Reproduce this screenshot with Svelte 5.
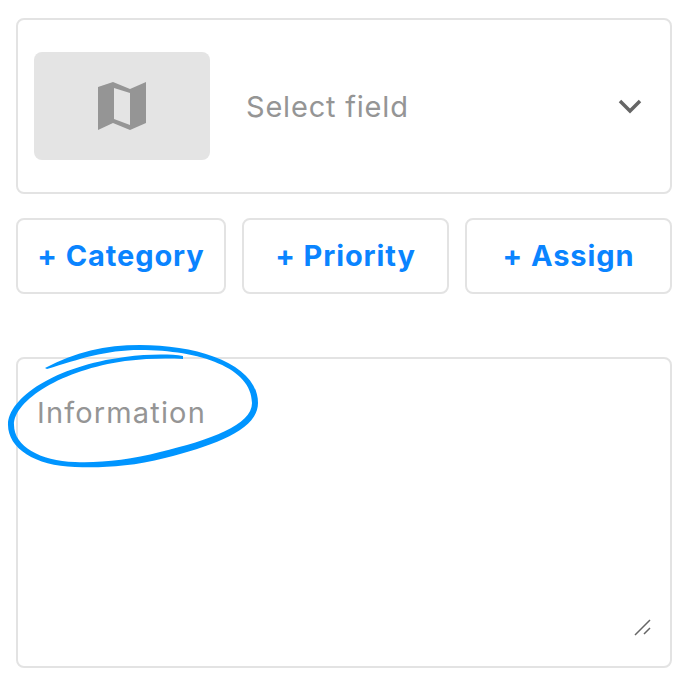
<script>
  let actions = ['Category', 'Priority', 'Assign'];
  let info = $state('');
</script>

<div class="page">
  <div class="field">
    <div class="thumb">
      <svg width="50" height="50" viewBox="0 0 50 50" aria-hidden="true">
        <path d="M1 6 L16 1 L33 8 L49 1 L49 42 L33 49 L16 42 L1 49 Z M17 7 L17 38 L33 44 L33 12 Z" fill="#959595" fill-rule="evenodd" />
      </svg>
    </div>
    <span class="select-label">Select field</span>
    <svg class="chevron" width="26" height="16" viewBox="0 0 26 16" aria-hidden="true">
      <path d="M3 3 L13 13 L23 3" fill="none" stroke="#666" stroke-width="3.500" />
    </svg>
  </div>

  <div class="actions">
    {#each actions as action}
      <button class="action">+ {action}</button>
    {/each}
  </div>

  <div class="info">
    <textarea placeholder="Information" bind:value={info}></textarea>
    <svg class="grip" width="18" height="18" viewBox="0 0 18 18" aria-hidden="true">
      <path d="M1 16 L16 1 M10 15 L16 9" stroke="#666" stroke-width="1.500" fill="none" />
    </svg>
    <svg class="scribble" width="692" height="130" viewBox="0 330 692 130" aria-hidden="true">
      <path fill="#0095ff" d="M45 368 C75 352 105 345 140 345 C200 345 258 365 258 403 C258 430 215 445 165 458 C130 467 100 468 75 467 C35 466 8 448 8 425 C8 398 55 366 125 357 C148 354 170 354 183 356 L183 359 C170 358 148 358 125 361 C62 370 14 400 14 425 C14 446 40 461 75 462 C100 463 130 460 160 452 C210 440 252 425 252 403 C252 368 200 350 140 350 C105 350 80 359 47 369 Z" />
    </svg>
  </div>
</div>

<style>
  :global(body) {
    background: #fff;
  }

  .page {
    width: 692px;
    height: 688px;
    box-sizing: border-box;
    padding: 18px 20px 20px 16px;
    display: flex;
    flex-direction: column;
    font-family: Inter, "Open Sans", sans-serif;
  }

  .field {
    height: 176px;
    box-sizing: border-box;
    border: 2px solid #e3e3e3;
    border-radius: 8px;
    display: flex;
    align-items: center;
    padding: 0 27px 0 16px;
  }

  .thumb {
    width: 176px;
    height: 108px;
    border-radius: 8px;
    background: #e4e4e4;
    display: flex;
    align-items: center;
    justify-content: center;
  }

  .select-label {
    margin-left: 36px;
    flex: 1;
    font-size: 29px;
    letter-spacing: 0.8px;
    color: #959595;
  }

  .actions {
    margin-top: 24px;
    display: grid;
    grid-template-columns: 210px 207px 207px;
    gap: 16px;
  }

  .action {
    height: 76px;
    padding: 0 0 2px;
    background: #fff;
    border: 2px solid #e3e3e3;
    border-radius: 8px;
    font-family: inherit;
    font-size: 29px;
    font-weight: 700;
    letter-spacing: 0.9px;
    color: #0a84ff;
  }

  .info {
    margin-top: 63px;
    height: 311px;
    position: relative;
  }

  textarea {
    display: block;
    width: 100%;
    height: 100%;
    box-sizing: border-box;
    padding: 36px 19px;
    border: 2px solid #e3e3e3;
    border-radius: 8px;
    outline: none;
    resize: none;
    font-family: inherit;
    font-size: 29px;
    letter-spacing: 1.15px;
    line-height: 36px;
  }

  textarea::placeholder {
    color: #959595;
    opacity: 1;
  }

  .grip {
    position: absolute;
    right: 20px;
    bottom: 31px;
  }

  .scribble {
    position: absolute;
    left: -16px;
    top: -27px;
    overflow: visible;
    pointer-events: none;
  }
</style>
